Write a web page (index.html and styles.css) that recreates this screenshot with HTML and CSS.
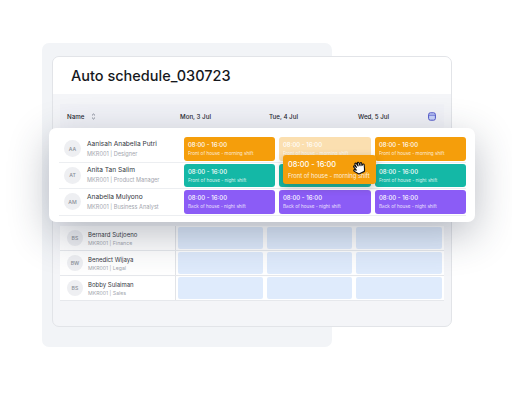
FILE: index.html
```html
<!DOCTYPE html>
<html lang="en">

<head>
    <meta charset="UTF-8">
    <title>Auto schedule</title>
    <link rel="stylesheet" href="styles.css">
</head>

<body>
    <div class="stage">
        <div class="back-panel"></div>

        <div class="sheet">
            <h1 class="sheet-title">Auto schedule_030723</h1>
            <div class="sheet-body">
                <div class="table-head">
                    <div class="head-name">
                        <span>Name</span>
                        <svg class="sort-icon" width="5" height="7" viewBox="0 0 5 7" fill="none" stroke="#6b7280" stroke-width="0.8">
                            <path d="M1 2.4 2.5 1 4 2.4" />
                            <path d="M1 4.6 2.5 6 4 4.6" />
                        </svg>
                    </div>
                    <div class="head-day">Mon, 3 Jul</div>
                    <div class="head-day">Tue, 4 Jul</div>
                    <div class="head-day">Wed, 5 Jul</div>
                    <svg class="cal-icon" width="8" height="9" viewBox="0 0 8 9">
                        <rect x="0.6" y="0.8" width="6.8" height="7.4" rx="1.8" fill="#c9d4fb" stroke="#4f55c9" stroke-width="1" />
                        <path d="M1 3.2H7" stroke="#4f55c9" stroke-width="0.8" />
                    </svg>
                </div>

                <div class="spacer-rows"></div>

                <div class="row">
                    <div class="person">
                        <div class="avatar">BS</div>
                        <div>
                            <div class="person-name">Bernard Sutjoeno</div>
                            <div class="person-role">MKR001 | Finance</div>
                        </div>
                    </div>
                    <div class="slot"></div>
                    <div class="slot"></div>
                    <div class="slot"></div>
                </div>
                <div class="row">
                    <div class="person">
                        <div class="avatar">BW</div>
                        <div>
                            <div class="person-name">Benedict Wijaya</div>
                            <div class="person-role">MKR001 | Legal</div>
                        </div>
                    </div>
                    <div class="slot"></div>
                    <div class="slot"></div>
                    <div class="slot"></div>
                </div>
                <div class="row">
                    <div class="person">
                        <div class="avatar">BS</div>
                        <div>
                            <div class="person-name">Bobby Sulaiman</div>
                            <div class="person-role">MKR001 | Sales</div>
                        </div>
                    </div>
                    <div class="slot"></div>
                    <div class="slot"></div>
                    <div class="slot"></div>
                </div>
            </div>
        </div>

        <div class="float-card">
            <div class="float-row">
                <div class="person">
                    <div class="avatar">AA</div>
                    <div>
                        <div class="person-name">Aanisah Anabella Putri</div>
                        <div class="person-role">MKR001 | Designer</div>
                    </div>
                </div>
                <div class="shift orange"><b>08:00 - 16:00</b><span>Front of house - morning shift</span></div>
                <div class="shift faded"><b>08:00 - 16:00</b><span>Front of house - morning shift</span></div>
                <div class="shift orange"><b>08:00 - 16:00</b><span>Front of house - morning shift</span></div>
            </div>
            <div class="float-row">
                <div class="person">
                    <div class="avatar">AT</div>
                    <div>
                        <div class="person-name">Anita Tan Salim</div>
                        <div class="person-role">MKR001 | Product Manager</div>
                    </div>
                </div>
                <div class="shift teal"><b>08:00 - 16:00</b><span>Front of house - night shift</span></div>
                <div class="shift teal"></div>
                <div class="shift teal"><b>08:00 - 16:00</b><span>Front of house - night shift</span></div>
            </div>
            <div class="float-row">
                <div class="person">
                    <div class="avatar">AM</div>
                    <div>
                        <div class="person-name">Anabella Mulyono</div>
                        <div class="person-role">MKR001 | Business Analyst</div>
                    </div>
                </div>
                <div class="shift purple"><b>08:00 - 16:00</b><span>Back of house - night shift</span></div>
                <div class="shift purple"><b>08:00 - 16:00</b><span>Back of house - night shift</span></div>
                <div class="shift purple"><b>08:00 - 16:00</b><span>Back of house - night shift</span></div>
            </div>
        </div>

        <div class="drag-shift">
            <b>08:00 - 16:00</b>
            <span>Front of house - morning shift</span>
            <svg class="hand" width="15" height="15" viewBox="0 0 20 19">
                <g transform="rotate(-25 10 10)">
                    <path d="M6 17C4.5 15 2 12.5 1.5 10.5 1.2 9.2 2.6 8.8 3.6 9.8L4.8 11 3.6 5.8C3.3 4.4 5 3.9 5.6 5.2L6.6 7.6 6.4 3.4C6.4 1.8 8.4 1.6 8.7 3.2L9.4 7 10 3.2C10.3 1.8 12.2 2 12.1 3.6L11.9 7.6 13.2 4.8C13.9 3.6 15.6 4.2 15.2 5.6L14.3 8.6 15.4 7.6C16.5 6.8 18 7.8 17.3 9.2 16.5 11 15.8 14.5 14 17Z" fill="#fff" stroke="#111" stroke-width="1.5" stroke-linejoin="round" />
                </g>
            </svg>
        </div>
    </div>
</body>

</html>
```

FILE: styles.css
```css
* {
    box-sizing: border-box;
}

body {
    margin: 0;
    background: #ffffff;
    font-family: Inter, Arial, sans-serif;
    overflow: hidden;
}

.stage {
    position: relative;
    width: 512px;
    height: 409px;
    overflow: hidden;
}

.back-panel {
    position: absolute;
    left: 42px;
    top: 43px;
    width: 290px;
    height: 304px;
    background: #f2f4f7;
    border-radius: 7px;
}

.sheet {
    position: absolute;
    left: 52px;
    top: 56px;
    width: 400px;
    height: 271px;
    background: #f4f5f8;
    border: 1px solid #e2e4e8;
    border-radius: 7px;
    overflow: hidden;
}

.sheet-title {
    margin: 0;
    height: 37px;
    padding: 7px 0 0 18px;
    background: #ffffff;
    font-size: 14.5px;
    line-height: 23px;
    font-weight: 500;
    color: #16181d;
}

.sheet-body {
    padding: 10px 7px 0;
}

.table-head {
    position: relative;
    display: grid;
    grid-template-columns: 116px 89px 89px 90px;
    height: 24px;
    align-items: center;
    background: #f1f2f7;
    font-size: 6.2px;
    font-weight: 500;
    color: #24272e;
}

.head-name {
    display: flex;
    align-items: center;
    gap: 7px;
    padding-left: 7px;
}

.head-day {
    padding-left: 4px;
}

.cal-icon {
    position: absolute;
    right: 8px;
    top: 8px;
}

.spacer-rows {
    height: 98px;
}

.row {
    display: grid;
    grid-template-columns: 116px 89px 89px 90px;
    height: 25px;
    background: #ffffff;
    border-bottom: 1px solid #e6e8ec;
}

.person {
    display: flex;
    align-items: center;
    gap: 5px;
    padding-left: 7px;
    border-right: 1px solid #e2e4e8;
}

.avatar {
    display: flex;
    align-items: center;
    justify-content: center;
    flex: none;
    width: 16px;
    height: 16px;
    background: #eeeff2;
    border-radius: 50%;
    font-size: 5.2px;
    font-weight: 500;
    color: #8b8f98;
}

.person-name {
    font-size: 6px;
    line-height: 9px;
    color: #33363d;
}

.person-role {
    font-size: 5.2px;
    line-height: 8px;
    color: #a3a6ae;
}

.slot {
    margin: 1px 2px 1px;
    background: #dfebfc;
    border-radius: 2px;
}

.float-card {
    position: absolute;
    left: 49px;
    top: 128px;
    width: 426px;
    height: 94px;
    padding: 9px 9px 0 10px;
    background: #ffffff;
    border-radius: 7px;
    box-shadow: 0 12px 40px rgba(40, 50, 70, 0.32);
}

.float-row {
    display: grid;
    grid-template-columns: 121px 91px 92px 91px;
    column-gap: 4px;
    height: 24.5px;
    margin-bottom: 2px;
    padding-bottom: 1px;
    box-shadow: 0 1px 0 #eceef1;
}

.float-row .person {
    margin-right: -4px;
    border-right: 0;
    padding-left: 5px;
    gap: 6px;
}

.float-row .person-name {
    font-size: 6.6px;
    margin-bottom: 1px;
}

.float-row .person-role {
    font-size: 5.6px;
}

.float-row .avatar {
    width: 17px;
    height: 17px;
}

.shift {
    display: flex;
    flex-direction: column;
    justify-content: center;
    gap: 2px;
    padding: 0 0 1px 4px;
    border-radius: 3px;
    color: #ffffff;
}

.shift b {
    font-size: 6px;
    line-height: 9px;
    font-weight: 500;
}

.shift span {
    font-size: 4.65px;
    line-height: 5px;
    opacity: 0.8;
}

.orange {
    background: #f59e0b;
}

.teal {
    background: #14b8a6;
}

.purple {
    background: #8b5cf6;
}

.faded {
    background: #fbdfb0;
}

.drag-shift {
    position: absolute;
    left: 283px;
    top: 155px;
    width: 93px;
    height: 29px;
    display: flex;
    flex-direction: column;
    justify-content: center;
    gap: 2px;
    padding-left: 5px;
    background: #f59e0b;
    border-radius: 3px;
    box-shadow: 0 3px 8px rgba(60, 50, 20, 0.3);
    color: #ffffff;
}

.drag-shift b {
    font-size: 7.4px;
    line-height: 10px;
    font-weight: 500;
}

.drag-shift span {
    font-size: 5.8px;
    line-height: 8px;
    white-space: nowrap;
    opacity: 0.85;
}

.hand {
    position: absolute;
    left: 69px;
    top: 5px;
}
```
